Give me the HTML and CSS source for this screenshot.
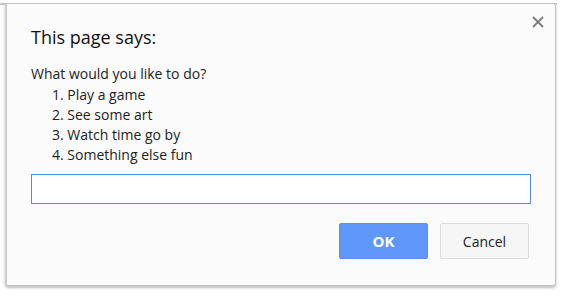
FILE: index.html
```html
<!DOCTYPE html>
<html lang="en">
<head>
    <meta charset="utf-8">
    <link rel="stylesheet" href="styles.css">
</head>
<body>
<div class="edge"></div>
<div class="dialog">
    <span class="close">
        <svg width="12" height="12" viewBox="0 0 12 12"><path d="M1 1L11 11M11 1L1 11" stroke="#7b7b7b" stroke-width="1.8"/></svg>
    </span>
    <h1 class="title">This page says:</h1>
    <div class="msg">
        <p>What would you like to do?</p>
        <p class="item">1. Play a game</p>
        <p class="item">2. See some art</p>
        <p class="item">3. Watch time go by</p>
        <p class="item">4. Something else fun</p>
    </div>
    <input class="answer" type="text">
    <div class="buttons">
        <button class="btn btn-ok">OK</button>
        <button class="btn btn-cancel">Cancel</button>
    </div>
</div>
</body>
</html>
```

FILE: styles.css
```css
* {
    margin: 0;
    padding: 0;
    box-sizing: border-box;
}
body {
    background-color: #fff;
    font-family: "Open Sans", "Noto Sans", sans-serif;
    color: #222;
    width: 561px;
    height: 295px;
    overflow: hidden;
}
.edge {
    height: 5px;
    width: 557px;
    border-bottom: 2px solid #c6c6c6;
    margin-bottom: -2px;
}
.dialog {
    position: relative;
    width: 551px;
    height: 283px;
    margin-left: 5px;
    background-color: #fbfbfb;
    border: 1px solid #c4c4c4;
    border-left: 2px solid #cdcdcd;
    border-radius: 0 3px 3px 3px;
    box-shadow: 0 2px 3px rgba(0,0,0,.25);
    padding: 21px 24px 0 24px;
}
.close {
    position: absolute;
    top: 12px;
    right: 11px;
    line-height: 0;
}
.title {
    font-weight: normal;
    font-size: 18px;
    line-height: 24px;
    color: #111;
}
.msg {
    margin-top: 15px;
    font-size: 14px;
    line-height: 20px;
}
.msg p:first-child {
    margin-bottom: 1px;
}
.msg .item {
    padding-left: 21px;
}
.answer {
    display: block;
    width: 100%;
    height: 30px;
    margin-top: 9px;
    border: 1px solid #4d8cf5;
    background-color: #fff;
    outline: none;
}
.buttons {
    display: flex;
    justify-content: flex-end;
    gap: 12px;
    margin-top: 19px;
    padding-right: 2px;
}
.btn {
    width: 89px;
    height: 36px;
    font-family: "Open Sans", "Noto Sans", sans-serif;
    font-size: 14px;
    border-radius: 2px;
}
.btn-ok {
    background-color: #5f97fa;
    border: 1px solid #5a8fe9;
    color: #fff;
    font-weight: bold;
    font-size: 15px;
}
.btn-cancel {
    background-color: #f6f6f6;
    border: 1px solid #dcdcdc;
    color: #222;
}
```
